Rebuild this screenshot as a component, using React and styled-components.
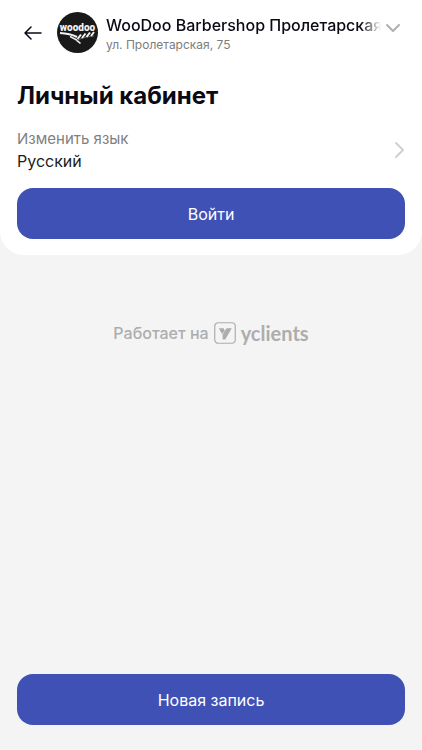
import styled, { createGlobalStyle } from "styled-components";

const GlobalStyle = createGlobalStyle`
  * {
    box-sizing: border-box;
  }
  body {
    margin: 0;
    background-color: #f4f4f4;
    font-family: Inter, "Liberation Sans", sans-serif;
    color: #0a0a14;
  }
  button {
    font-family: inherit;
    cursor: pointer;
  }
`;

const Container = styled.div`
  min-height: 100vh;
  display: flex;
  flex-direction: column;
`;

const Card = styled.section`
  display: flex;
  flex-direction: column;
  padding: 12px 17px 16px;
  background-color: #ffffff;
  border-radius: 0 0 24px 24px;
`;

const Header = styled.header`
  display: flex;
  align-items: center;
  gap: 8px;
`;

const IconButton = styled.button`
  display: flex;
  align-items: center;
  justify-content: center;
  width: 32px;
  height: 32px;
  padding: 0;
  border: none;
  background: none;
`;

const CompanyButton = styled.button`
  flex: 1;
  min-width: 0;
  display: flex;
  align-items: flex-start;
  gap: 4px;
  padding: 0 4px 0 0;
  border: none;
  background: none;
  color: inherit;
  text-align: left;
`;

const CompanyInfo = styled.span`
  flex: 1;
  min-width: 0;
  display: flex;
  flex-direction: column;
`;

const CompanyName = styled.span`
  overflow: hidden;
  white-space: nowrap;
  font-size: 16px;
  font-weight: 500;
  line-height: 24px;
  mask-image: linear-gradient(to left, transparent, #000 20px);
`;

const Address = styled.span`
  font-size: 12px;
  line-height: 16px;
  color: #7d7d7d;
`;

const Chevron = styled.svg`
  flex: none;
  fill: none;
  stroke: ${(props) => props.color};
  stroke-width: 2;
  stroke-linecap: round;
  stroke-linejoin: round;
`;

const Title = styled.h1`
  margin: 25px 0 13px;
  font-size: 24px;
  font-weight: 700;
  line-height: 36px;
`;

const LanguageButton = styled.button`
  display: flex;
  align-items: center;
  justify-content: space-between;
  padding: 0;
  margin-bottom: 15px;
  border: none;
  background: none;
  color: #1c1c22;
  text-align: left;
  font-size: 16px;
  line-height: 23px;
`;

const LanguageInfo = styled.span`
  display: flex;
  flex-direction: column;
`;

const Label = styled.span`
  font-size: 15px;
  color: #7f7f7f;
`;

const PrimaryButton = styled.button`
  width: 100%;
  height: 51px;
  padding: 0 16px;
  border: none;
  border-radius: 16px;
  background-color: #3f51b5;
  color: #ffffff;
  font-size: 16px;
  line-height: 24px;
`;

const Powered = styled.a`
  display: flex;
  align-items: center;
  justify-content: center;
  gap: 5px;
  margin-top: 66px;
  color: #adadad;
  text-decoration: none;
  font-size: 16px;
  font-weight: 500;
  line-height: 24px;
`;

const Brand = styled.span`
  font-family: Lato, Inter, sans-serif;
  font-size: 20px;
  font-weight: 700;
`;

const Footer = styled.footer`
  margin-top: auto;
  padding: 16px 17px 25px;
`;

const ArrowLeft = () => (
  <svg width="18" height="14" viewBox="0 0 18 14" fill="none" stroke="#0a0a14" strokeWidth="1.5" strokeLinecap="round" strokeLinejoin="round">
    <path d="M17 7H1M7 1L1 7l6 6" />
  </svg>
);

const SalonLogo = () => (
  <svg width="41" height="41" viewBox="0 0 41 41">
    <circle cx="20.5" cy="20.5" r="20.5" fill="#191919" />
    <text x="20.5" y="19" textAnchor="middle" fontFamily="Roboto, sans-serif" fontSize="10" fontWeight="900" fill="#f2f2f2">
      woodoo
    </text>
    <path d="M3 21c6 .3 12 1.5 17 4" fill="none" stroke="#f2f2f2" strokeWidth="2" />
    <path d="M13 24.5c4 1.5 7 3.5 10.5 7" fill="none" stroke="#f2f2f2" strokeWidth="1.5" />
    <path d="M19 29c5-3 11-4.500 18-5" fill="none" stroke="#9a9a9a" strokeWidth="0.6" />
    <path d="M20.5 27l3.500-4.500M25 26l3.500-4.500M29.500 25l3.500-4.500M34 24l3-4" fill="none" stroke="#f2f2f2" strokeWidth="2" />
  </svg>
);

const YclientsLogo = () => (
  <svg width="22" height="22" viewBox="0 0 22 22">
    <rect x="0.75" y="0.75" width="20.5" height="20.5" rx="3.5" fill="none" stroke="#adadad" strokeWidth="1.2" />
    <path d="M4.8 6.2h5l1 2.800-2.900 3z" fill="#adadad" />
    <path d="M12.6 6.2h5.200L11.200 17.500H8.600V12.400z" fill="#adadad" />
  </svg>
);

const App = () => {
  return (
    <Container>
      <GlobalStyle />
      <Card>
        <Header>
          <IconButton aria-label="Назад">
            <ArrowLeft />
          </IconButton>
          <SalonLogo />
          <CompanyButton>
            <CompanyInfo>
              <CompanyName>WooDoo Barbershop Пролетарская</CompanyName>
              <Address>ул. Пролетарская, 75</Address>
            </CompanyInfo>
            <Chevron width="16" height="28" viewBox="0 0 16 28" color="#b0b0b0">
              <path d="M2 12l6 6 6-6" />
            </Chevron>
          </CompanyButton>
        </Header>
        <Title>Личный кабинет</Title>
        <LanguageButton>
          <LanguageInfo>
            <Label>Изменить язык</Label>
            <span>Русский</span>
          </LanguageInfo>
          <Chevron width="11" height="18" viewBox="0 0 11 18" color="#d0d0d0">
            <path d="M2 2l7 7-7 7" />
          </Chevron>
        </LanguageButton>
        <PrimaryButton>Войти</PrimaryButton>
      </Card>
      <Powered href="#">
        Работает на
        <YclientsLogo />
        <Brand>yclients</Brand>
      </Powered>
      <Footer>
        <PrimaryButton>Новая запись</PrimaryButton>
      </Footer>
    </Container>
  );
};

export default App;
